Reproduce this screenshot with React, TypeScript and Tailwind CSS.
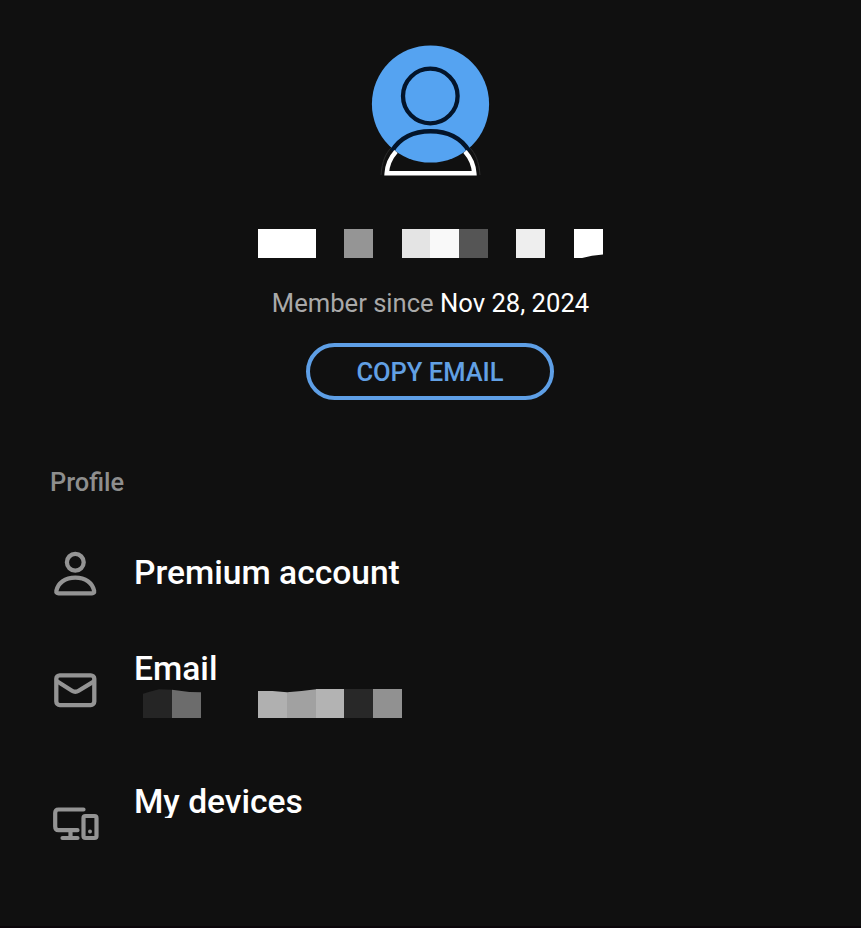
import React from "react";

type Tile = { left: string; color: string; clip?: string };

const nameTiles: Tile[] = [
  { left: "ml-0 w-[58px]", color: "bg-white" },
  { left: "ml-[28px] w-[29px]", color: "bg-[#959595]" },
  { left: "ml-[29px] w-[28px]", color: "bg-[#e4e4e4]" },
  { left: "ml-0 w-[29px]", color: "bg-[#f9f9f9]" },
  { left: "ml-0 w-[29px]", color: "bg-[#555555]" },
  { left: "ml-[28px] w-[29px]", color: "bg-[#eeeeee]" },
  { left: "ml-[29px] w-[29px]", color: "bg-white", clip: "[clip-path:polygon(0_0,100%_0,100%_88%,62%_92%,28%_100%,0_100%)]" },
];

const emailTiles: Tile[] = [
  { left: "ml-[9px] w-[29px]", color: "bg-[#252525]", clip: "[clip-path:polygon(0_16%,20%_10%,55%_1%,100%_3%,100%_100%,0_100%)]" },
  { left: "ml-0 w-[29px]", color: "bg-[#6c6c6c]", clip: "[clip-path:polygon(0_3%,60%_10%,100%_11%,100%_100%,0_100%)]" },
  { left: "ml-[57px] w-[29px]", color: "bg-[#b0b0b0]", clip: "[clip-path:polygon(0_7%,50%_7%,100%_11%,100%_100%,0_100%)]" },
  { left: "ml-0 w-[29px]", color: "bg-[#a1a1a1]", clip: "[clip-path:polygon(0_11%,50%_7%,100%_1%,100%_100%,0_100%)]" },
  { left: "ml-0 w-[28px]", color: "bg-[#b3b3b3]" },
  { left: "ml-0 w-[29px]", color: "bg-[#282828]" },
  { left: "ml-0 w-[29px]", color: "bg-[#919191]" },
];

function Tiles({ items }: { items: Tile[] }) {
  return (
    <div className="flex h-[29px]">
      {items.map((t, i) => (
        <div key={i} className={`h-full shrink-0 ${t.left} ${t.color} ${t.clip ?? ""}`} />
      ))}
    </div>
  );
}

function Avatar() {
  return (
    <svg width="122" height="136" viewBox="370 43 122 136" className="block">
      <circle cx="430.5" cy="104" r="58.6" fill="#55a3f1" />
      <g fill="none">
        <circle cx="430.3" cy="96" r="27.3" stroke="#03142a" strokeWidth="4.3" />
        <path d="M381 175C382 161 386 153 391 148M470 148C475 153 479 161 480 175" stroke="#2c2c2c" strokeWidth="1" />
        <path d="M392 151C400 138 413 131.300 430.500 131.300S461 138 469 151" stroke="#03142a" strokeWidth="4.600" />
        <path d="M396 151.500C390.200 158 387.300 165 386.700 173.300H474.300C473.700 165 470.800 158 465 151.500" stroke="#fff" strokeWidth="4.500" />
      </g>
    </svg>
  );
}

function UserIcon() {
  return (
    <svg width="46" height="48" viewBox="52 550 46 48" fill="none" stroke="#949494" strokeWidth="4.3" strokeLinejoin="round">
      <circle cx="75.3" cy="562.3" r="8.4" />
      <path d="M58.500 593.300H92Q94.500 593.300 94.100 590.800C92.500 583 85.500 577.600 75.300 577.600S58 583 56.400 590.800Q56 593.300 58.500 593.300Z" />
    </svg>
  );
}

function MailIcon() {
  return (
    <svg width="46" height="38" viewBox="52 671 46 38" fill="none" stroke="#949494" strokeWidth="4.3" strokeLinejoin="round">
      <rect x="56.300" y="675.300" width="38" height="29.800" rx="3.500" />
      <path d="M57 681.300L72 690.700Q75.300 692.800 78.600 690.700L94 681.300" />
    </svg>
  );
}

function DevicesIcon() {
  return (
    <svg width="50" height="38" viewBox="51 805 50 38" fill="none" stroke="#949494" strokeWidth="4.2" strokeLinecap="round" strokeLinejoin="round">
      <path d="M83.500 809.500H58.500Q55.200 809.500 55.200 813V826.500Q55.200 830.200 58.500 830.200H77.500M70.500 830.500V837M62.500 838H77.500" />
      <rect x="83.500" y="816" width="13" height="22" rx="2" />
      <circle cx="90" cy="831.500" r="2" fill="#949494" stroke="none" />
    </svg>
  );
}

const title = "text-[33.6px] leading-[40px] font-medium text-white whitespace-nowrap";

export default function App() {
  return (
    <main className="flex h-[928px] w-[861px] flex-col overflow-hidden border-b-2 border-[#0b060a] bg-[#101010] font-[Roboto,sans-serif]">
      <header className="flex flex-col items-center pt-[43px]">
        <Avatar />
        <div className="mt-[50px]">
          <Tiles items={nameTiles} />
        </div>
        <p className="mt-[29px] text-[25.6px] leading-[32px] whitespace-nowrap text-[#a9a9a9]">
          Member since <span className="text-white">Nov 28, 2024</span>
        </p>
        <button className="mt-[24px] mr-px h-[57px] w-[248px] rounded-full border-4 border-[#5e9fe6] text-[25.5px] leading-[30px] font-medium text-[#62a0e4]">
          COPY EMAIL
        </button>
      </header>
      <section className="px-[50px]">
        <h2 className="mt-[66px] text-[25.4px] leading-[32px] font-medium text-[#8e8e8e]">Profile</h2>
        <div className="mt-[52px] flex h-[48px] items-start pl-[2px]">
          <UserIcon />
          <div className="ml-[36px] pt-[3px]">
            <div className={title}>Premium account</div>
          </div>
        </div>
        <div className="mt-[51px] flex h-[68px] items-start pl-[2px]">
          <div className="pt-[22px]"><MailIcon /></div>
          <div className="ml-[36px]">
            <div className={title}>Email</div>
            <Tiles items={emailTiles} />
          </div>
        </div>
        <div className="mt-[65px] flex h-[61px] items-start pl-px">
          <div className="pt-[23px]"><DevicesIcon /></div>
          <div className="ml-[33px] h-[36px] overflow-hidden">
            <div className={title}>My devices</div>
          </div>
        </div>
      </section>
    </main>
  );
}
